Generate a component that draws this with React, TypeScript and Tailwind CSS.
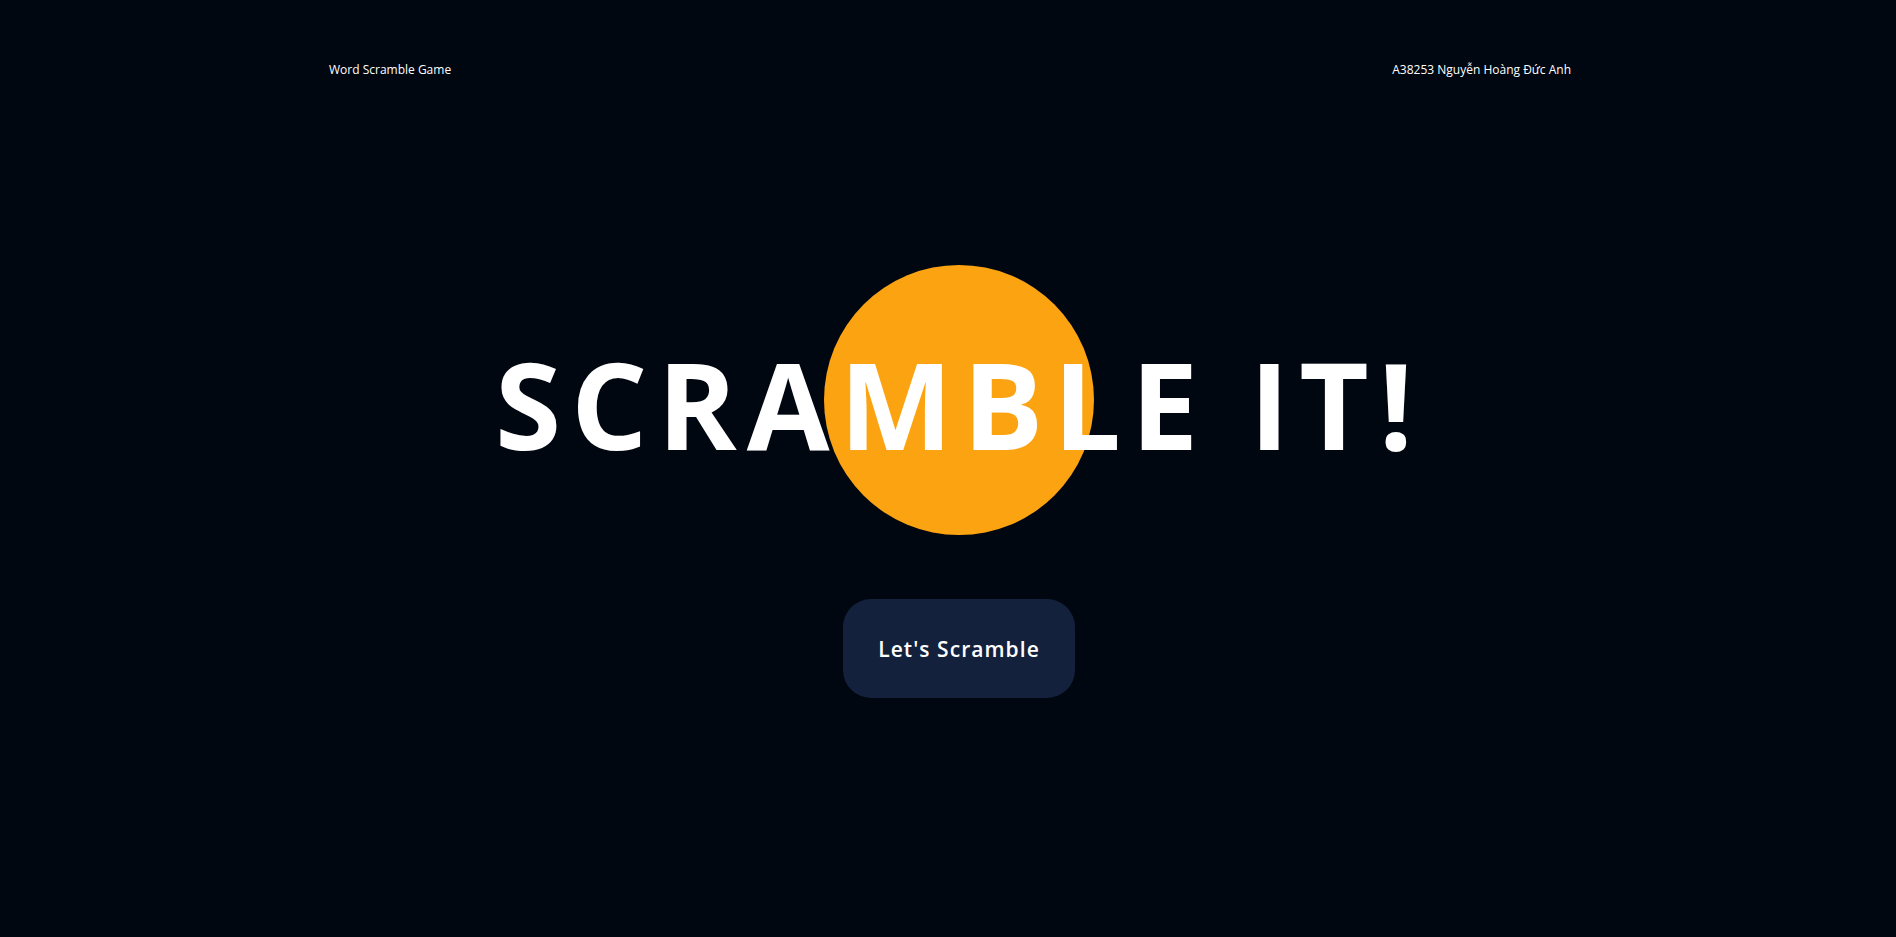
export default function App() {
  return (
    <div className="min-h-screen overflow-x-hidden bg-[#000711] font-['Open_Sans','Noto_Sans',sans-serif] text-white">
      <header className="mx-auto flex max-w-[1246px] items-center justify-between pt-[60px] pl-1 text-[12px] leading-5 font-medium">
        <p>Word Scramble Game</p>
        <p>A38253 Nguyễn Hoàng Đức Anh</p>
      </header>
      <main className="flex flex-col items-center gap-16 pt-[185px] pl-[22px]">
        <div className="grid place-items-center">
          <div className="col-start-1 row-start-1 size-[270px] rounded-full bg-[#fca311]" />
          <h1 className="z-10 col-start-1 row-start-1 pt-2 text-[120px] leading-[160px] font-bold tracking-[10px] whitespace-nowrap">
            SCRAMBLE IT!
          </h1>
        </div>
        <button
          type="button"
          className="rounded-[28px] bg-[#14213d] px-[35px] pt-[35px] pb-[33px] text-[21px] leading-[31px] font-semibold tracking-wider"
        >
          Let's Scramble
        </button>
      </main>
    </div>
  );
}
